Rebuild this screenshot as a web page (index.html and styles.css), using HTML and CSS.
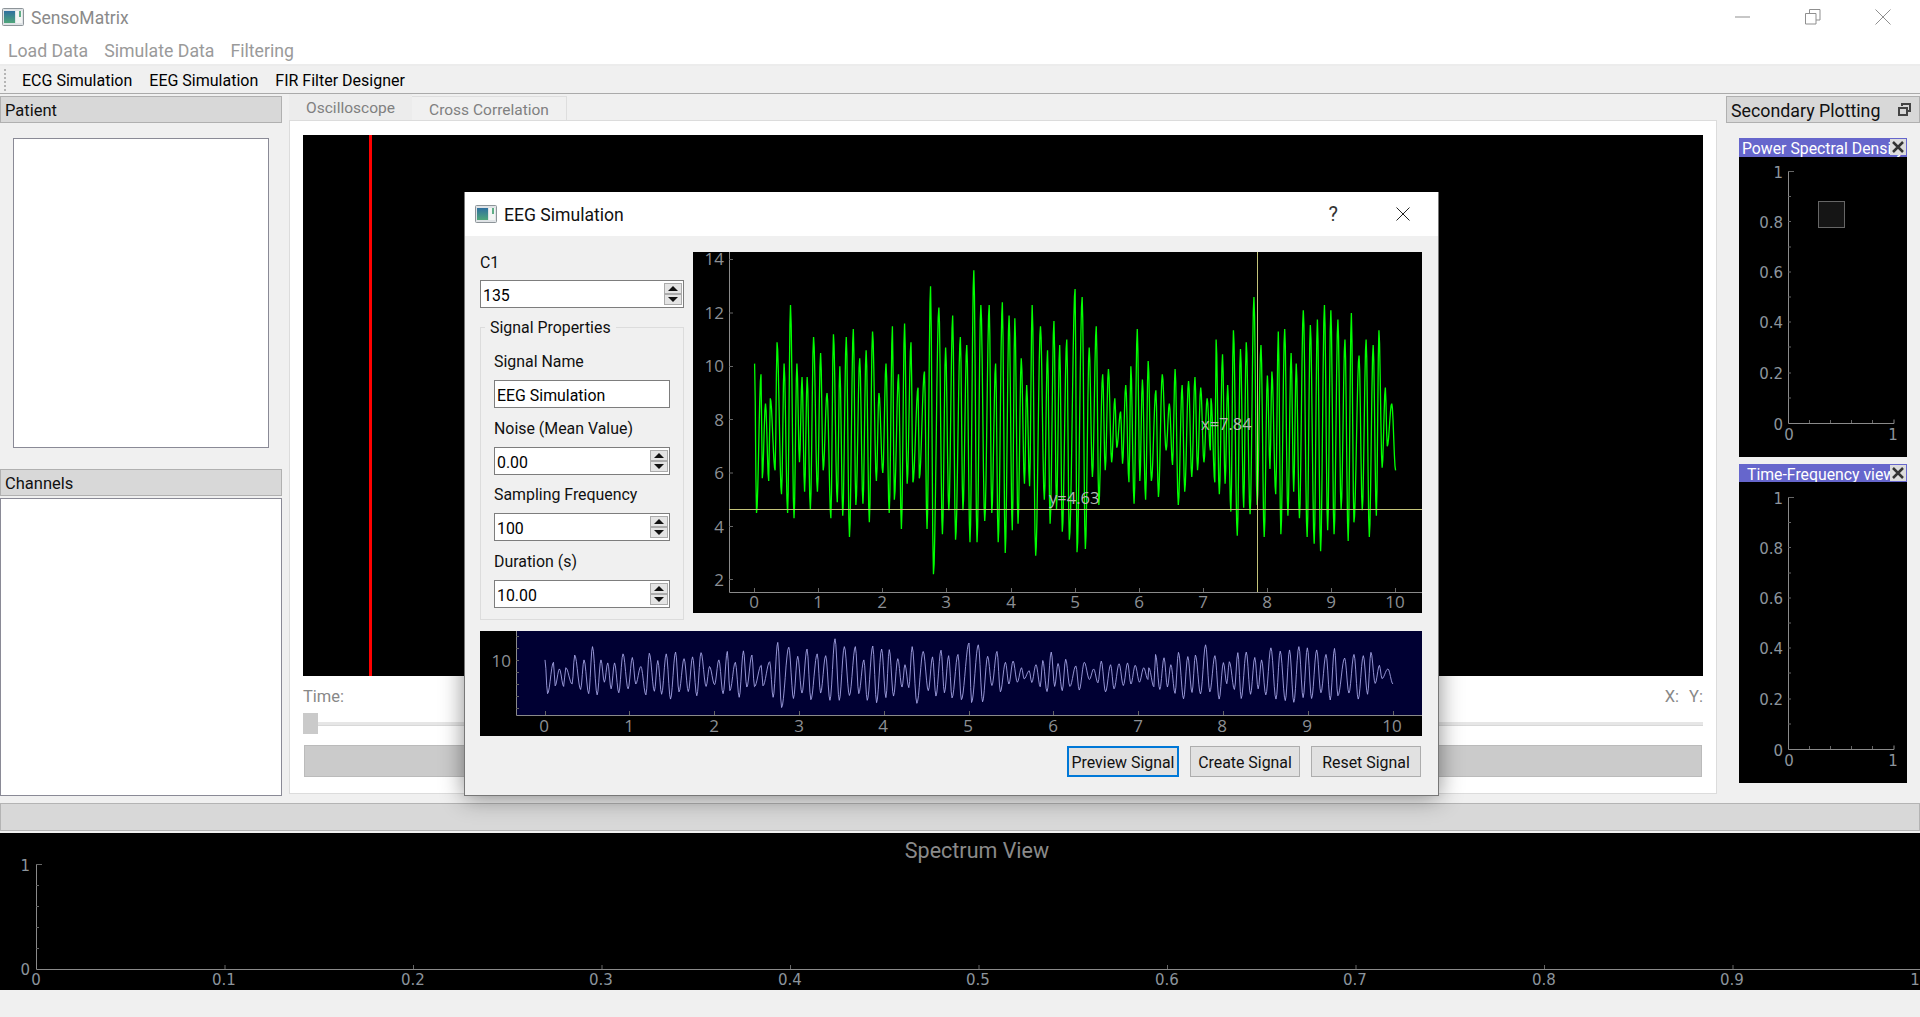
FILE: index.html
```html
<!DOCTYPE html>
<html lang="en">
<head>
<meta charset="utf-8">
<title>SensoMatrix</title>
<link rel="stylesheet" href="styles.css">
</head>
<body>
<div class="app">
  <header class="titlebar">
    <svg class="app-icon" viewBox="0 0 22 18"><defs><linearGradient id="ig" x1="0" y1="0" x2="0" y2="1"><stop offset="0" stop-color="#2f6f9f"/><stop offset="1" stop-color="#4fa67a"/></linearGradient></defs><rect x=".5" y=".5" width="21" height="17" rx="1" fill="#dfe3e6" stroke="#8d9499"/><rect x="2" y="3" width="11" height="12" fill="url(#ig)"/><rect x="14" y="3" width="6" height="12" fill="#f3f5f4"/><rect x="17" y="3" width="2" height="6" fill="#5fae86"/></svg>
    <span class="app-name">SensoMatrix</span>
    <div class="win-controls">
      <svg class="win-btn" viewBox="0 0 16 16"><path d="M0 8h15"/></svg>
      <svg class="win-btn" viewBox="0 0 16 16"><path d="M.5 4.5h10.5v10.5h-10.5zM4.5 4.5v-4h10.5v10.5h-4"/></svg>
      <svg class="win-btn" viewBox="0 0 16 16"><path d="M.5.5l15 15M15.500.5l-15 15"/></svg>
    </div>
  </header>
  <nav class="menubar"><span>Load Data</span><span>Simulate Data</span><span>Filtering</span></nav>
  <div class="toolbar"><i class="handle"></i><span>ECG Simulation</span><span>EEG Simulation</span><span>FIR Filter Designer</span></div>

  <div class="workspace">
    <aside class="left-dock">
      <div class="dock-head">Patient</div>
      <div class="patient-body"><div class="listbox"></div></div>
      <div class="dock-head">Channels</div>
      <div class="listbox channels"></div>
    </aside>

    <main class="center">
      <div class="tabs"><span class="tab active">Oscilloscope</span><span class="tab">Cross Correlation</span></div>
      <div class="pane">
        <div class="scope"><i class="cursor"></i></div>
        <div class="readout"><span>Time:</span><span class="xy"><span>X:</span><span>Y:</span></span></div>
        <div class="slider"><i class="thumb"></i><i class="groove"></i></div>
        <div class="graybar"></div>
      </div>
    </main>

    <aside class="right-dock">
      <div class="dock-head">Secondary Plotting
        <svg class="float-icon" viewBox="0 0 13 13"><path d="M4 3V1h8v7h-3M1 5h8v7H1z"/></svg>
      </div>
      <div class="side-panels">
        <section class="side-panel">
          <div class="panel-title"><span>Power Spectral Density</span><button class="panel-close"><svg viewBox="0 0 16 16"><path d="M3 3l10 10M13 3L3 13"/></svg></button></div>
          <svg class="side-plot" viewBox="0 0 168 300">
            <g id="sideaxes">
              <path class="axis" d="M49.500 14V266.500H155M155 266.500v-4"/>
              <path class="tick" d="M49 14.500h6M49 39.500h3M49 64.500h3M49 90h3M49 115h3M49 140h3M49 165h3M49 190h3M49 216h3M49 241h3M70.500 266v-3M91.500 266v-3M112.500 266v-3M133.500 266v-3"/>
              <g class="dv r"><text x="44" y="15.500">1</text><text x="44" y="66">0.8</text><text x="44" y="116">0.6</text><text x="44" y="166">0.4</text><text x="44" y="217">0.2</text><text x="44" y="267.500">0</text></g>
              <g class="dv c"><text x="50" y="278">0</text><text x="154" y="278">1</text></g>
            </g>
            <rect class="legend" x="79.500" y="44.500" width="26" height="26"/>
          </svg>
        </section>
        <section class="side-panel second">
          <div class="panel-title tf"><span>Time-Frequency view</span><button class="panel-close"><svg viewBox="0 0 16 16"><path d="M3 3l10 10M13 3L3 13"/></svg></button></div>
          <svg class="side-plot" viewBox="0 -1 168 301"><use href="#sideaxes"/></svg>
        </section>
      </div>
    </aside>
  </div>

  <div class="statusbar"></div>

  <svg class="spectrum" viewBox="0 0 1920 157">
    <text class="spec-title" x="977" y="17">Spectrum View</text>
    <path class="axis" d="M36.500 31V136.500H1920"/>
    <path class="tick" d="M36 31.500h6M36 52.500h3M36 73.500h3M36 94.500h3M36 115.500h3M225 136v-4M413.500 136v-4M602 136v-4M790.500 136v-4M979 136v-4M1167.500 136v-4M1356 136v-4M1544.500 136v-4M1733 136v-4"/>
    <g class="dv r"><text x="30" y="33">1</text><text x="30" y="137">0</text></g>
    <g class="dv c"><text x="36" y="147">0</text><text x="224" y="147">0.1</text><text x="413" y="147">0.2</text><text x="601" y="147">0.3</text><text x="790" y="147">0.4</text><text x="978" y="147">0.5</text><text x="1167" y="147">0.6</text><text x="1355" y="147">0.7</text><text x="1544" y="147">0.8</text><text x="1732" y="147">0.9</text><text x="1915" y="147">1</text></g>
  </svg>
  <div class="footer"></div>

  <div class="dialog">
    <div class="dlg-title">
      <svg class="app-icon" viewBox="0 0 22 18"><defs><linearGradient id="ig2" x1="0" y1="0" x2="0" y2="1"><stop offset="0" stop-color="#2f6f9f"/><stop offset="1" stop-color="#4fa67a"/></linearGradient></defs><rect x=".5" y=".5" width="21" height="17" rx="1" fill="#dfe3e6" stroke="#8d9499"/><rect x="2" y="3" width="11" height="12" fill="url(#ig2)"/><rect x="14" y="3" width="6" height="12" fill="#f3f5f4"/><rect x="17" y="3" width="2" height="6" fill="#5fae86"/></svg>
      <span class="dlg-name">EEG Simulation</span>
      <span class="dlg-help">?</span>
      <svg class="dlg-close" viewBox="0 0 14 14"><path d="M.5.500l13 13M13.500.500l-13 13"/></svg>
    </div>
    <div class="dlg-body">
      <div class="dlg-top">
        <div class="controls">
          <label class="lbl c1">C1</label>
          <div class="spin wide"><span>135</span><div class="spin-btns"><b class="up"></b><b class="down"></b></div></div>
          <div class="group">
            <span class="group-title">Signal Properties</span>
            <label class="lbl">Signal Name</label>
            <div class="spin"><span>EEG Simulation</span></div>
            <label class="lbl">Noise (Mean Value)</label>
            <div class="spin"><span>0.00</span><div class="spin-btns"><b class="up"></b><b class="down"></b></div></div>
            <label class="lbl">Sampling Frequency</label>
            <div class="spin"><span>100</span><div class="spin-btns"><b class="up"></b><b class="down"></b></div></div>
            <label class="lbl">Duration (s)</label>
            <div class="spin"><span>10.00</span><div class="spin-btns"><b class="up"></b><b class="down"></b></div></div>
          </div>
        </div>
        <svg class="main-plot" viewBox="0 0 729 361">
          <defs>
            <polyline id="sig" class="trace" points="0,8 10,8"/>
          </defs>
          <use class="green" href="#sig" transform="matrix(64.1 0 0 -26.67 61.6 381)"/>
          <path class="axis" d="M36.500 0V340.500H729"/>
          <path class="tick" d="M36 7.500h4M36 61h4M36 114.500h4M36 167.500h4M36 221h4M36 274.500h4M36 327.500h4M61.500 340v-4M125.500 340v-4M189.500 340v-4M253.500 340v-4M318.500 340v-4M382.500 340v-4M446.500 340v-4M510.500 340v-4M574.500 340v-4M638.500 340v-4M702.500 340v-4"/>
          <path class="cross" d="M36 257.500H729M564.500 0V340"/>
          <g class="sv r"><text x="31" y="6.500">14</text><text x="31" y="60">12</text><text x="31" y="113">10</text><text x="31" y="167">8</text><text x="31" y="220">6</text><text x="31" y="274">4</text><text x="31" y="327">2</text></g>
          <g class="sv c"><text x="61" y="349.500">0</text><text x="125" y="349.500">1</text><text x="189" y="349.500">2</text><text x="253" y="349.500">3</text><text x="318" y="349.500">4</text><text x="382" y="349.500">5</text><text x="446" y="349.500">6</text><text x="510" y="349.500">7</text><text x="574" y="349.500">8</text><text x="638" y="349.500">9</text><text x="702" y="349.500">10</text></g>
          <text class="probe" x="508" y="171">x=7.84</text>
          <text class="probe" x="356" y="245">y=4.63</text>
        </svg>
      </div>
      <svg class="preview-plot" viewBox="0 0 942 105">
        <rect class="navy" x="36" y="0" width="906" height="84"/>
        <use class="violet" href="#sig" transform="matrix(84.8 0 0 -6.03 65 89.8)"/>
        <path class="axis" d="M36.500 0V84.500H942"/>
        <path class="tick" d="M36 5.500h3M36 17.500h3M36 29.500h3M36 41.500h3M36 53.500h3M36 65.500h3M36 77.500h3M65.500 84v-4M149.500 84v-4M234.500 84v-4M319.500 84v-4M404.500 84v-4M489.500 84v-4M573.500 84v-4M658.500 84v-4M743.500 84v-4M828.500 84v-4M913.500 84v-4"/>
        <g class="sv r"><text x="31" y="29">10</text></g>
        <g class="sv c"><text x="64" y="94">0</text><text x="149" y="94">1</text><text x="234" y="94">2</text><text x="319" y="94">3</text><text x="403" y="94">4</text><text x="488" y="94">5</text><text x="573" y="94">6</text><text x="658" y="94">7</text><text x="742" y="94">8</text><text x="827" y="94">9</text><text x="912" y="94">10</text></g>
      </svg>
      <div class="dlg-buttons">
        <button class="btn primary">Preview Signal</button>
        <button class="btn">Create Signal</button>
        <button class="btn">Reset Signal</button>
      </div>
    </div>
  </div>
</div>
<script src="script.js"></script>
</body>
</html>
```
FILE: styles.css
```css
* { box-sizing: border-box; }
html, body { margin: 0; padding: 0; }
body { width: 1920px; height: 1017px; overflow: hidden; background: #f0f0f0; font-family: Roboto, "Open Sans", sans-serif; font-size: 15.900px; color: #111; }
.app { position: relative; display: flex; flex-direction: column; width: 1920px; height: 1017px; }

.titlebar { height: 40px; flex: none; background: #fff; display: flex; align-items: center; padding: 0 0 6px 2px; }
.app-icon { width: 22px; height: 18px; flex: none; }
.app-name { margin: 2px 0 0 7px; font-size: 17.500px; color: #8a8a8a; }
.win-controls { margin-left: auto; display: flex; gap: 54px; padding-right: 29px; }
.win-btn { width: 16px; height: 16px; fill: none; stroke: #8f8f8f; stroke-width: 1; }

.menubar { height: 26px; flex: none; background: #fff; border-bottom: 2px solid #ececec; display: flex; gap: 16px; padding: 0 0 3px 8px; align-items: center; font-size: 17.700px; color: #9a9a9a; }
.toolbar { height: 28px; flex: none; background: #f0f0f0; border-bottom: 1px solid #aaa; display: flex; align-items: center; gap: 17px; padding: 1px 0 0 4px; color: #000; font-size: 16px; }
.handle { width: 2px; height: 22px; margin-right: -1px; border-left: 2px dotted #b5b5b5; }

.workspace { height: 709px; flex: none; display: flex; }
.left-dock { width: 282px; flex: none; display: flex; flex-direction: column; padding-top: 2px; }
.dock-head { height: 27px; flex: none; position: relative; background: #d8d8d8; border: 1px solid #b0b0b0; padding-left: 4px; line-height: 28px; font-size: 16.500px; color: #111; }
.patient-body { height: 346px; flex: none; padding: 15px 13px 21px 13px; }
.patient-body .listbox { height: 310px; }
.listbox { background: #fff; border: 1px solid #8a8a96; }
.channels { margin-top: 2px; height: 298px; }

.center { width: 1428px; flex: none; margin-left: 7px; display: flex; flex-direction: column; }
.tabs { height: 26px; flex: none; display: flex; align-items: flex-end; font-size: 15.500px; }
.tab { width: 155px; height: 24px; background: #f0f0f0; border: 1px solid #dedede; border-bottom: 0; border-left: 0; color: #808080; text-align: center; line-height: 27px; }
.tab.active { width: 123px; height: 26px; background: #ececec; border: 0; line-height: 28px; }
.pane { height: 674px; flex: none; background: #fff; border: 1px solid #dcdcdc; padding: 14px 13px 0; display: flex; flex-direction: column; }
.scope { height: 541px; flex: none; background: #000; padding-left: 66px; }
.cursor { display: block; width: 3px; height: 100%; background: #f00; }
.readout { height: 37px; flex: none; display: flex; justify-content: space-between; align-items: center; color: #888; padding-top: 3px; font-size: 16.500px; }
.xy { display: flex; gap: 10px; }
.slider { height: 21px; flex: none; display: flex; align-items: center; }
.thumb { width: 15px; height: 21px; flex: none; background: #cacaca; }
.groove { flex: 1; height: 4px; background: #e6e6e6; border-bottom: 1px solid #d8d8d8; }
.graybar { height: 32px; flex: none; margin: 11px 1px 0 1px; background: #cbcbcb; border: 1px solid #bbb; }

.right-dock { width: 194px; flex: none; margin-left: 9px; display: flex; flex-direction: column; padding-top: 2px; }
.right-dock .dock-head { font-size: 17.800px; }
.float-icon { position: absolute; right: 8px; top: 6px; width: 13px; height: 13px; fill: none; stroke: #444; stroke-width: 2; }
.side-panels { padding: 15px 13px 0; display: flex; flex-direction: column; gap: 7px; }
.side-panel { width: 168px; display: flex; flex-direction: column; }
.panel-title { height: 19px; flex: none; position: relative; overflow: hidden; background: #6666cc; color: #fff; padding-left: 3px; line-height: 21px; font-size: 15.800px; white-space: nowrap; }
.panel-title.tf { height: 18px; padding-left: 8px; line-height: 22px; }
.panel-close { position: absolute; right: 1px; top: 1px; width: 16px; height: 16px; padding: 0; border: 0; background: #dcdcdc; display: block; }
.panel-close svg { display: block; width: 16px; height: 16px; fill: none; stroke: #333; stroke-width: 2.500; }
.side-plot { display: block; width: 168px; height: 300px; background: #000; flex: none; }
.second .side-plot { height: 301px; }

.statusbar { height: 28px; flex: none; background: #d8d8d8; border: 1px solid #b4b4b4; margin-bottom: 2px; }
.spectrum { display: block; width: 1920px; height: 157px; flex: none; background: #000; }
.footer { flex: 1; background: #f0f0f0; }
.spec-title { font-family: Roboto, sans-serif; font-size: 21.500px; fill: #8a8a8a; text-anchor: middle; dominant-baseline: central; }

.axis { fill: none; stroke: #8a8a8a; stroke-width: 1; }
.tick { fill: none; stroke: #666; stroke-width: 1; }
.dv text { font-family: "DejaVu Sans", sans-serif; font-size: 15px; fill: #8c949c; dominant-baseline: central; }
.sv text { font-family: "Open Sans", sans-serif; font-size: 17px; fill: #8c8f94; dominant-baseline: central; }
.r text { text-anchor: end; }
.c text { text-anchor: middle; }
.legend { fill: #151515; stroke: #666; stroke-width: 1; }

.dialog { position: absolute; left: 464px; top: 192px; width: 975px; height: 604px; background: #f0f0f0; border: 1px solid #777; border-top: 0; box-shadow: 0 2px 22px rgba(0, 0, 0, .45); display: flex; flex-direction: column; }
.dlg-title { height: 44px; flex: none; background: #fff; display: flex; align-items: center; padding-left: 10px; }
.dlg-name { margin: 2px 0 0 7px; font-size: 17.600px; color: #111; }
.dlg-help { margin-left: auto; font-size: 20px; color: #333; }
.dlg-close { width: 14px; height: 14px; margin-left: 58px; margin-right: 28px; fill: none; stroke: #222; stroke-width: 1; }
.dlg-body { flex: 1; display: flex; flex-direction: column; padding: 16px 15px 0; }
.dlg-top { height: 368px; flex: none; display: flex; gap: 9px; }
.controls { width: 204px; flex: none; display: flex; flex-direction: column; }
.lbl { display: block; height: 19.670px; line-height: 22px; }
.c1 { height: 20px; margin-bottom: 8px; }
.spin { position: relative; height: 28px; flex: none; background: #fff; border: 1px solid #7d7d7d; padding-left: 2px; line-height: 30px; color: #000; }
.spin-btns { position: absolute; right: 1px; top: 2px; width: 18px; height: 22px; display: flex; flex-direction: column; }
.spin-btns b { flex: 1; background: #e4e4e4; border: 1px solid #ababab; display: flex; align-items: center; justify-content: center; }
.spin-btns b::after { content: ""; border-left: 5px solid transparent; border-right: 5px solid transparent; }
.up::after { border-bottom: 5px solid #111; }
.down::after { border-top: 5px solid #111; }
.group { position: relative; flex: none; margin-top: 19px; height: 293px; border: 1px solid #dcdcdc; padding: 23px 13px 0; display: flex; flex-direction: column; gap: 9.500px; }
.group-title { position: absolute; left: 4px; top: -10px; padding: 0 5px; line-height: 20px; background: #f0f0f0; }
.main-plot { display: block; width: 729px; height: 361px; flex: none; background: #000; }
.trace { fill: none; vector-effect: non-scaling-stroke; }
.green { stroke: #00ff00; stroke-width: 1.300; }
.violet { stroke: #a4a4e4; stroke-width: .9; }
.cross { fill: none; stroke: #c4c47a; stroke-width: 1; }
.probe { font-family: "Open Sans", sans-serif; font-size: 16.500px; fill: #b4bab4; dominant-baseline: central; }
.preview-plot { display: block; width: 942px; height: 105px; flex: none; margin-top: 11px; background: #000; }
.navy { fill: #000033; }
.dlg-buttons { display: flex; justify-content: flex-end; gap: 11px; margin-top: 10px; padding-right: 2px; }
.btn { width: 110px; height: 31px; padding: 2px 0 0; background: #e1e1e1; border: 1px solid #adadad; font: inherit; color: #111; }
.btn.primary { width: 112px; border: 2px solid #0078d7; }
```
FILE: script.js
```js
// Extremes of the simulated EEG trace as time, value pairs; the trace is resampled at 100 Hz.
var extremes = [0,10.1,.03,4.5,.1,9.7,.12,5.8,.17,8.6,.22,5.7,.245,8.8,.32,6.1,.35,10.9,.42,5.2,.46,10.1,.515,4.5,.56,12.3,.615,4.3,.66,10.1,.7,6.4,.74,9.6,.78,5.3,.82,9.6,.87,4.65,.92,11.1,.98,5.3,1.03,10.5,1.07,6.1,1.13,9,1.19,4.3,1.23,11.2,1.29,4.9,1.33,10,1.375,4.4,1.43,11.1,1.48,3.6,1.54,11.4,1.58,4.8,1.64,10.3,1.69,4.85,1.74,10.6,1.79,4.15,1.84,11.3,1.9,5.7,1.94,9,2,6,2.05,10.1,2.1,4.5,2.15,11.5,2.18,5,2.245,9.7,2.29,3.9,2.34,11.6,2.38,5.6,2.44,10.9,2.47,5.65,2.55,9.2,2.57,5.8,2.65,9.8,2.69,3.9,2.745,13,2.79,2.2,2.875,12.2,2.93,3.7,2.98,10.7,3.03,4.6,3.09,11.9,3.135,3.5,3.21,11.1,3.25,4.6,3.31,10.8,3.36,3.4,3.42,13.6,3.47,3.4,3.53,12.3,3.59,4.2,3.66,12.3,3.7,4.5,3.76,10.1,3.8,3.4,3.865,12.4,3.91,3,3.97,11.9,4.02,3.85,4.06,11.8,4.11,4.1,4.16,10.3,4.21,5.6,4.245,9.3,4.29,5.5,4.33,12.3,4.385,2.9,4.46,11.5,4.52,5,4.57,10.6,4.61,4.1,4.67,11.7,4.71,4.65,4.76,10.8,4.8,3.8,4.87,11,4.91,3.5,5,12.9,5.03,3.03,5.11,12.6,5.16,3.15,5.22,10.7,5.27,5.85,5.33,11.5,5.37,4.8,5.43,9.7,5.47,6.1,5.52,9.9,5.57,6.4,5.62,8.8,5.65,6.95,5.71,8.3,5.74,6.35,5.79,9.3,5.84,5.65,5.87,10,5.92,4.85,5.97,11.4,6.01,5.7,6.05,9.5,6.1,5,6.14,10.2,6.19,5.7,6.26,9.1,6.3,5.1,6.36,9.7,6.42,6.85,6.47,8.6,6.52,6.3,6.56,9.9,6.61,4.8,6.67,9.3,6.71,5.3,6.77,9.45,6.82,5.85,6.87,9.6,6.91,6.1,6.96,9.2,7.01,6.4,7.06,8.8,7.11,6.85,7.12,8.8,7.18,5.65,7.2,11,7.25,5.2,7.3,10.45,7.34,5.6,7.38,9.3,7.43,4.55,7.47,11.35,7.53,3.65,7.58,10.65,7.63,4.7,7.67,10.9,7.73,4.45,7.79,12.6,7.84,4.8,7.9,10.8,7.95,3.6,8,9.65,8.04,6.15,8.07,9.8,8.13,5.2,8.17,11.3,8.21,3.7,8.27,11.4,8.32,4.4,8.37,10.5,8.41,5.3,8.45,10.1,8.5,4.3,8.56,12.1,8.62,3.6,8.67,11.55,8.73,3.35,8.78,11.75,8.83,3.07,8.89,12.3,8.94,3.85,8.99,12.1,9.04,3.7,9.1,11.75,9.15,4.65,9.21,11,9.26,3.45,9.31,12,9.35,4.15,9.43,10.4,9.48,4.6,9.54,11,9.59,3.6,9.65,10.8,9.7,4.4,9.74,11.35,9.79,6.2,9.84,9.2,9.87,7,9.94,8.6,10,6.1];

// Walk the extremes in order and insert cosine-eased samples between each pair.
var merged = [];
for (var i = 0; i < extremes.length - 2; i += 2) {
  var t0 = extremes[i], v0 = extremes[i + 1], t1 = extremes[i + 2], v1 = extremes[i + 3];
  var steps = Math.max(1, Math.round((t1 - t0) * 100));
  for (var s = 0; s < steps; s++) {
    var k = s / steps;
    var v = v0 + (v1 - v0) * (1 - Math.cos(Math.PI * k)) / 2;
    merged.push((t0 + (t1 - t0) * k).toFixed(3) + "," + v.toFixed(3));
  }
}
merged.push("10,6.1");
document.getElementById("sig").setAttribute("points", merged.join(" "));
```
